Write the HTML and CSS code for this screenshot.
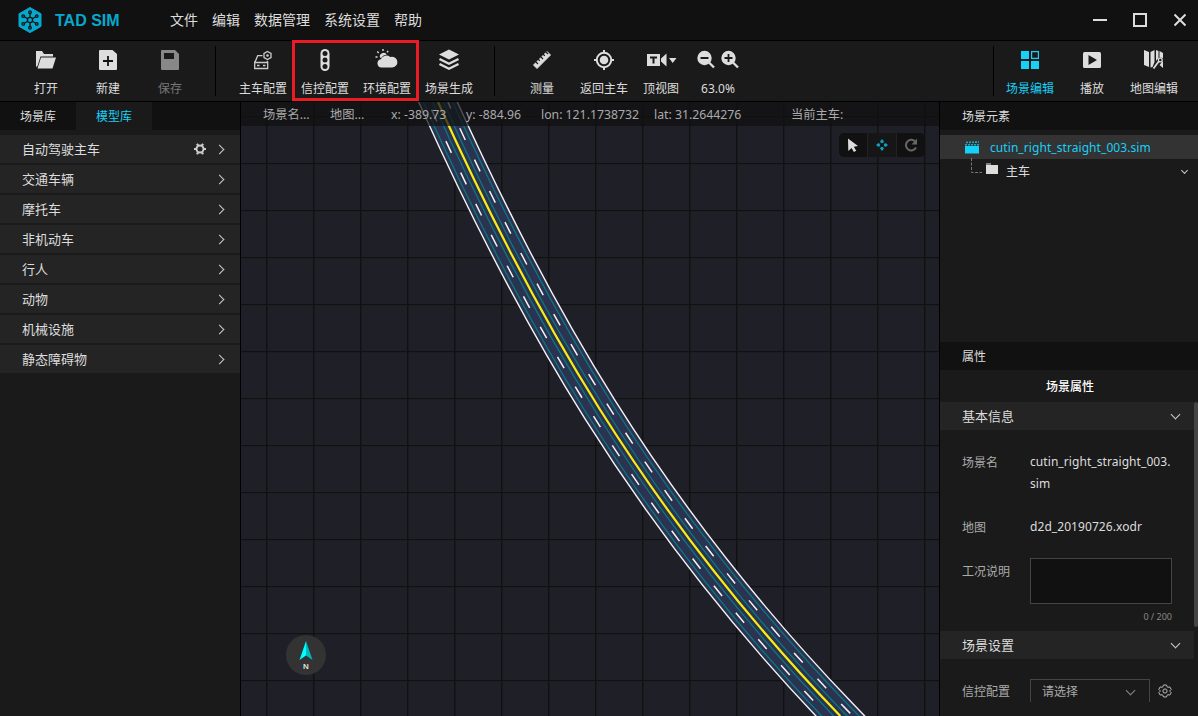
FILE: index.html
```html
<!DOCTYPE html>
<html lang="zh-CN">
<head>
<meta charset="utf-8">
<title>TAD SIM</title>
<link rel="stylesheet" href="styles.css">
</head>
<body>
<div class="app">
  <header class="titlebar">
    <svg class="logo" width="24" height="26" viewBox="0 0 24 26">
      <path d="M12 0.5 23 6.8v12.6L12 25.600 1 19.400V6.800z" fill="#06a9cd" stroke="#06a9cd" stroke-linejoin="round"/>
      <g fill="none" stroke="#111" stroke-width="1.300">
        <circle cx="12" cy="13" r="2.600"/>
        <path d="M12 10.400V6.500M12 15.600v4M9.700 11.700 6.300 9.700M14.300 11.700l3.400-2M9.700 14.300l-3.400 2M14.300 14.300l3.400 2"/>
        <circle cx="12" cy="5.200" r="1.300"/><circle cx="12" cy="20.800" r="1.300"/>
        <circle cx="5.200" cy="9.100" r="1.300"/><circle cx="18.800" cy="9.100" r="1.300"/>
        <circle cx="5.200" cy="16.900" r="1.300"/><circle cx="18.800" cy="16.900" r="1.300"/>
      </g>
    </svg>
    <span class="brand">TAD SIM</span>
    <nav class="menu"><span>文件</span><span>编辑</span><span>数据管理</span><span>系统设置</span><span>帮助</span></nav>
    <svg class="winctl" width="96" height="16" viewBox="0 0 96 16" fill="none" stroke="#ddd" stroke-width="2">
      <path d="M1 8h14M42 2h12v12H42z"/><path d="M82.500 2.500l11 11M93.500 2.500l-11 11"/>
    </svg>
  </header>

  <div class="toolbar">
    <div class="group group-file">
      <div class="tool"><svg width="24" height="24" viewBox="0 0 24 24"><path fill="#ddd" d="M2 19V3h6l2 3h9v2.500H6.500L3.500 18zM7 9.500h15L18.500 20.500H3.500z"/></svg><span>打开</span></div>
      <div class="tool"><svg width="24" height="24" viewBox="0 0 24 24"><path fill="#ddd" d="M4 2h12.500L21 6v15q0 1-1 1H4q-1 0-1-1V3q0-1 1-1z"/><path stroke="#111" stroke-width="1.800" d="M12 8v10M7 13h10"/></svg><span>新建</span></div>
      <div class="tool off"><svg width="24" height="24" viewBox="0 0 24 24"><path fill="#888" d="M4 2h13l4 4v15q0 1-1 1H4q-1 0-1-1V3q0-1 1-1z"/><path fill="#1a1a1a" d="M6 5h10v6H6z"/></svg><span>保存</span></div>
    </div>
    <div class="group group-config">
      <div class="tool"><svg width="24" height="24" viewBox="0 0 24 24" fill="none" stroke="#ccc" stroke-width="1.300"><path d="M11.500 7.700H6.700L4.500 13 3.700 14v6.500h13v-6.500L16 13M4.300 14.500h12"/><path d="M6 17.500h2.500M12 17.500h2.500" stroke-width="1.500"/><path d="M16.500 3.500 20 5.500v4L16.500 11.500 13 9.500v-4z"/><circle cx="16.500" cy="7.500" r=".7"/></svg><span>主车配置</span></div>
      <div class="tool"><svg width="24" height="24" viewBox="0 0 24 24"><rect x="7.500" y="1" width="9" height="22" rx="4.500" fill="#ddd"/><g fill="#1a1a1a"><circle cx="12" cy="5.500" r="2.500"/><circle cx="12" cy="12" r="2.500"/><circle cx="12" cy="18.500" r="2.500"/></g></svg><span>信控配置</span></div>
      <div class="tool"><svg width="24" height="24" viewBox="0 0 24 24"><g transform="translate(-1 0)"><path fill="#ddd" d="M7.500 19.500a4.200 4.200 0 0 1-.7-8.300 6.100 6.100 0 0 1 9.400-2.200 5.400 5.400 0 1 1 1.800 10.500zM6 9.700a3.800 3.800 0 0 1 6.800-3.200c-2.600.4-4.200 1.200-5.400 3.200z"/><path stroke="#ddd" stroke-width="1.400" d="M1.500 9h2M3.300 3.500l1.400 1.400M9 1v2M14.200 3l-1.200 1.400"/></g></svg><span>环境配置</span></div>
      <div class="tool"><svg width="24" height="24" viewBox="0 0 24 24"><path fill="#ddd" d="M12 1.500 22 6.500 12 11.500 2 6.500z"/><path fill="none" stroke="#ddd" stroke-width="2.300" d="M2.500 11l9.500 4.800L21.500 11M2.500 16l9.500 4.800L21.500 16"/></svg><span>场景生成</span></div>
      <div class="highlight"></div>
    </div>
    <div class="group group-view">
      <div class="tool"><svg width="24" height="24" viewBox="0 0 24 24"><path fill="#ddd" d="M17 3.500l3.500 3.500L7 20.500 3.500 17z" stroke="#ddd" stroke-linejoin="round"/><path stroke="#1a1a1a" stroke-width="1.200" d="M5.500 13.500l2.500 2.500M8 11l1.800 1.800M10.500 8.500 13 11M13 6l1.800 1.800M15.500 3.500 18 6"/></svg><span>测量</span></div>
      <div class="tool"><svg width="24" height="24" viewBox="0 0 24 24"><circle cx="12" cy="12" r="7.200" fill="none" stroke="#ddd" stroke-width="2"/><circle cx="12" cy="12" r="4.300" fill="#ddd"/><path stroke="#ddd" stroke-width="2" d="M12 2v3M12 19v3M2 12h3M19 12h3"/></svg><span>返回主车</span></div>
      <div class="tool narrow"><svg width="32" height="24" viewBox="0 0 32 24"><path fill="#ddd" d="M2 6h13v12H2zM16 10.500l5.500-5v13l-5.500-5z"/><path stroke="#1a1a1a" stroke-width="2" d="M5 9.500h7M8.500 9v6.500"/><path fill="#ddd" d="M24 10h7.500L27.700 15z"/></svg><span>顶视图</span></div>
      <div class="tool"><svg width="44" height="24" viewBox="0 0 44 24"><g fill="#ddd"><circle cx="8.500" cy="10" r="7.200"/><circle cx="32.500" cy="10" r="7.200"/></g><path stroke="#ddd" stroke-width="2.300" d="M13 14.500l5 5M37 14.500l5 5"/><path stroke="#1a1a1a" stroke-width="1.800" d="M4.500 10h8M28.500 10h8M32.500 6v8"/></svg><span>63.0%</span></div>
    </div>
    <div class="group group-mode">
      <div class="tool on"><svg width="24" height="24" viewBox="0 0 24 24" fill="#17d0f7"><path d="M3 3h8v8H3zM3 13h8v8H3zM13 13h8v8h-8z"/><path fill="none" stroke="#17d0f7" stroke-width="1.200" d="M13.600 3.600h6.800v6.800h-6.800z"/></svg><span>场景编辑</span></div>
      <div class="tool"><svg width="24" height="24" viewBox="0 0 24 24"><rect x="3" y="4" width="18" height="16" rx="1.500" fill="#ddd"/><path fill="#1a1a1a" d="M8.500 7v10L17 12z"/></svg><span>播放</span></div>
      <div class="tool"><svg width="24" height="24" viewBox="0 0 24 24"><path fill="#ddd" d="M2 2l5 2v15l-5-2zM8.500 4l4-2v12l-2 5-2 .5zM14 2l2.500 1v7L14 13zM17.500 3l3.500 2v5l-3.500-.5z"/><path fill="none" stroke="#ddd" stroke-width="1.800" d="M11.500 20.500l5.500-7.500"/><circle cx="18.300" cy="12" r="1.900" fill="none" stroke="#ddd" stroke-width="1.300"/><path fill="#ddd" d="M17.500 17l3.500 3v-7z"/></svg><span>地图编辑</span></div>
    </div>
  </div>

  <main class="main">
    <aside class="library">
      <div class="tabs"><span class="tab">场景库</span><span class="tab active">模型库</span></div>
      <div class="list">
        <div class="row"><span>自动驾驶主车</span><svg class="gear" width="14" height="14" viewBox="0 0 14 14"><circle cx="7" cy="7" r="3.500" fill="none" stroke="#ccc" stroke-width="2"/><path stroke="#ccc" stroke-width="2.200" d="M1 7h2M11 7h2M4 1.800l1 1.700M10 1.800 9 3.500M4 12.200l1-1.700M10 12.200l-1-1.700"/></svg><i class="arrow"></i></div>
        <div class="row"><span>交通车辆</span><i class="arrow"></i></div>
        <div class="row"><span>摩托车</span><i class="arrow"></i></div>
        <div class="row"><span>非机动车</span><i class="arrow"></i></div>
        <div class="row"><span>行人</span><i class="arrow"></i></div>
        <div class="row"><span>动物</span><i class="arrow"></i></div>
        <div class="row"><span>机械设施</span><i class="arrow"></i></div>
        <div class="row"><span>静态障碍物</span><i class="arrow"></i></div>
      </div>
    </aside>

    <section class="map">
      <svg class="canvas" width="698" height="614" viewBox="241 102 698 614">
        <defs><pattern id="grid" x="266" y="163" width="47" height="47" patternUnits="userSpaceOnUse"><path fill="#111" d="M0 0h47v1.200H0zM0 0h1.500v47H0z"/></pattern></defs>
        <rect x="241" y="102" width="698" height="614" fill="#1f1f28"/>
        <rect x="241" y="102" width="698" height="614" fill="url(#grid)"/>
        <g fill="none" stroke-linecap="square">
          <path class="edge" d="M438 102C530.100 306.700 642.800 511.300 840.300 716"/>
          <path class="deck" d="M438 102C530.100 306.700 642.800 511.300 840.300 716"/>
          <path class="lane" d="M423.300 102C515 306.700 626.800 511.300 821.700 716"/>
          <path class="lane" d="M432.700 102C524.700 306.700 637.100 511.300 833.600 716"/>
          <path class="lane" d="M443.300 102C535.500 306.700 648.500 511.300 847 716"/>
          <path class="lane" d="M452.700 102C545.200 306.700 658.800 511.300 858.900 716"/>
        </g>
        <g fill="none" class="dashes">
          <path stroke-dashoffset="-8.400" d="M428.100 102C520 306.700 632 511.300 827.800 716"/>
          <path stroke-dashoffset="5.800" d="M447.900 102C540.200 306.700 653.600 511.300 852.800 716"/>
        </g>
        <path class="center" d="M438 102C530.100 306.700 642.800 511.300 840.300 716"/>
      </svg>
      <div class="status">
        <span class="s-scene">场景名...</span><span class="s-map">地图...</span><span class="s-x">x: -389.73</span><span class="s-y">y: -884.96</span><span class="s-lon">lon: 121.1738732</span><span class="s-lat">lat: 31.2644276</span><span>当前主车:</span>
      </div>
      <div class="maptools">
        <span><svg width="18" height="18" viewBox="0 0 18 18"><path fill="#ddd" d="M4 2.500 14 10l-4.200.7 2.400 4.100-2.300 1.300-2.300-4.200L4.300 15z"/></svg></span>
        <span class="mid"><svg width="18" height="18" viewBox="0 0 18 18" fill="#0b9fba"><path d="M9 3l2 2.500-1 1.500H8L7 5.500zM9 15l2-2.500-1-1.500H8l-1 1.500zM3 9l2.500-2L7 8v2l-1.500 1zM15 9l-2.500-2L11 8v2l1.500 1z"/></svg></span>
        <span><svg width="18" height="18" viewBox="0 0 18 18"><path fill="none" stroke="#666" stroke-width="2" d="M14 11.500A5.300 5.300 0 1 1 13.500 6"/><path fill="#666" d="M15 2.500v6H9.500z"/></svg></span>
      </div>
      <div class="compass"><svg width="14" height="19" viewBox="0 0 14 19"><path fill="#00ffff" d="M7 0 .5 19 7 14.500z"/><path fill="#00b8bd" d="M7 0l6.500 19L7 14.500z"/></svg><span>N</span></div>
    </section>

    <aside class="inspector">
      <div class="head">场景元素</div>
      <div class="tree">
        <div class="node root"><svg width="15" height="13" viewBox="0 0 15 13"><path fill="#17d0f7" d="M0 5h14v7.500H0z"/><path stroke="#17a9c7" stroke-width="1.600" stroke-dasharray="2 1" d="M0 3.700h14M1 1.500l13-.5"/></svg><span>cutin_right_straight_003.sim</span></div>
        <div class="node child"><svg width="28" height="17" viewBox="0 0 28 17"><path fill="none" stroke="#777" stroke-dasharray="3 1.500" d="M.5 0v14.500H11"/><path fill="#ddd" d="M15 7h12v9H15zM15 5.500h5v1h-5z"/></svg><span>主车</span><i class="arrow down small"></i></div>
      </div>
      <div class="head">属性</div>
      <div class="title">场景属性</div>
      <div class="props">
        <div class="section"><span>基本信息</span><i class="arrow down"></i></div>
        <div class="form form-basic">
          <div class="field f-name"><label>场景名</label><div class="val">cutin_right_straight_003.<br>sim</div></div>
          <div class="field f-map"><label>地图</label><div class="val">d2d_20190726.xodr</div></div>
          <div class="field f-note"><label>工况说明</label><div class="area"></div></div>
          <div class="count">0 / 200</div>
        </div>
        <div class="section"><span>场景设置</span><i class="arrow down"></i></div>
        <div class="form-set"><label>信控配置</label><div class="select"><span>请选择</span><i class="arrow down dim"></i></div>
          <svg width="14" height="14" viewBox="0 0 14 14" fill="none" stroke="#bbb"><path d="M5.500 1h3l.5 1.700 1 .6 1.800-.4 1.400 2.500L12 6.600v.8l1.200 1.200-1.400 2.500-1.800-.4-1 .6-.5 1.700h-3L5 11.300l-1-.6-1.800.4L.8 8.600 2 7.400v-.8L.8 5.400l1.400-2.500 1.800.4 1-.6z"/><circle cx="7" cy="7" r="2.100"/></svg></div>
        <div class="thumb"></div>
      </div>
    </aside>
  </main>
</div>
</body>
</html>
```
FILE: styles.css
```css
* { box-sizing: border-box; }
body {
  margin: 0;
  background: #1a1a1a;
  color: #ddd;
  font: 12px/18px "Noto Sans", "Noto Sans CJK SC", sans-serif;
}
.app { width: 1198px; height: 716px; display: flex; flex-direction: column; overflow: hidden; }
svg { display: block; flex: none; }
span, label { white-space: nowrap; }

.titlebar { height: 41px; flex: none; display: flex; align-items: center; background: #111; border-bottom: 1px solid #000; padding: 0 10px 0 18px; }
.brand { width: 115px; margin-left: 13px; padding-top: 1px; color: #06a9cd; font: bold 16px/24px "Liberation Sans", sans-serif; }
.menu { display: flex; gap: 14px; font-size: 14px; line-height: 20px; }
.winctl { margin-left: auto; }

.toolbar { height: 61px; flex: none; display: flex; border-bottom: 1px solid #000; }
.group { display: flex; position: relative; }
.group::after { content: ""; width: 1px; height: 50px; margin-top: 5px; background: #000; }
.group-file { padding-left: 15px; }
.group-file::after { margin-left: 14px; }
.group-config { padding-left: 16px; }
.group-config::after { margin-left: 14px; }
.group-view { padding-left: 16px; }
.group-view::after { display: none; }
.group-mode { margin-left: auto; padding-right: 13px; }
.group-mode::after { order: -1; margin-right: 5px; }
.tool { width: 62px; padding-top: 7px; display: flex; flex-direction: column; align-items: center; gap: 8px; }
.tool.narrow { width: 52px; }
.tool.off { color: #777; }
.tool.on { color: #17d0f7; }
.highlight { position: absolute; left: 76px; top: -1px; width: 127px; height: 61px; border: 3px solid #ed1c24; }

.main { flex: 1; min-height: 0; display: grid; grid-template-columns: 241px 698px 259px; }
.library { border-right: 1px solid #000; }
.tabs { height: 28px; display: flex; background: #111; }
.tab { width: 76px; line-height: 30px; height: 28px; text-align: center; }
.tab.active { color: #17d0f7; background: #1a1a1a; }
.list { padding-top: 5px; display: flex; flex-direction: column; gap: 2px; }
.row { height: 28px; display: flex; align-items: center; padding: 0 14px 0 22px; background: #242424; font-size: 13px; }
.row .arrow { margin-left: auto; }
.gear { margin-left: auto; }
.row .gear + .arrow { margin-left: 12px; }
.arrow { width: 7px; height: 7px; border: solid #ccc; border-width: 1px 1px 0 0; transform: translateX(-3px) rotate(45deg); }
.arrow.down { transform: translateY(-2px) rotate(135deg); }
.arrow.small { width: 5px; height: 5px; }
.child .arrow.small { transform: translateY(-1px) rotate(135deg); }
.arrow.dim { border-color: #888; }

.map { position: relative; overflow: hidden; }
.edge { stroke: #f4f4f4; stroke-width: 36.6; }
.deck { stroke: #2b3350; stroke-width: 33.8; }
.lane { stroke: #087880; stroke-width: 1.3; }
.dashes { stroke: #f4f4f4; stroke-width: 1.5; stroke-dasharray: 13 21.7; }
.center { fill: none; stroke: #f6ee12; stroke-width: 2.2; }
.status { position: absolute; inset: 0 0 auto; height: 24px; padding: 2px 0 0 22px; display: flex; align-items: center; background: rgba(17, 17, 17, .72); color: #aaa; font-size: 12.250px; }
.s-scene { width: 67px; }
.s-map { width: 61px; }
.s-x, .s-y { width: 75px; }
.s-lon { width: 113px; }
.s-lat { width: 137px; }
.maptools { position: absolute; left: 598px; top: 31px; display: flex; border-radius: 5px; overflow: hidden; background: #111; }
.maptools span { width: 28px; height: 24px; padding: 3px 5px; }
.maptools .mid { width: 30px; padding-left: 5px; background: #161616; border: solid #222; border-width: 0 1px; }
.compass { position: absolute; left: 45px; top: 533px; width: 40px; height: 40px; border-radius: 50%; background: #333; display: flex; flex-direction: column; align-items: center; padding-top: 6px; font: bold 8px/13px "Liberation Sans", sans-serif; }

.inspector { border-left: 1px solid #000; display: flex; flex-direction: column; }
.head { height: 28px; flex: none; background: #111; padding-left: 22px; line-height: 30px; }
.tree { height: 212px; flex: none; padding-top: 5px; }
.node { height: 24px; display: flex; align-items: center; }
.node span { padding-top: 2px; }
.root { padding-left: 25px; gap: 10px; background: #333; color: #17d0f7; letter-spacing: .07px; }
.child { padding: 0 11px 0 31px; gap: 7px; }
.child svg { align-self: flex-start; margin-top: -1px; }
.child .arrow { margin-left: auto; }
.title { height: 32px; flex: none; padding-left: 2px; line-height: 34px; text-align: center; color: #fff; font-weight: 500; }
.props { position: relative; height: 300px; overflow: hidden; padding-right: 4px; }
.section { height: 28px; display: flex; align-items: center; justify-content: space-between; padding: 0 15px 0 22px; background: #242424; font-size: 13px; }
.form-basic { height: 201px; padding: 21px 18px 0 22px; color: #aaa; }
.field { display: flex; line-height: 22px; }
.field label, .form-set label { width: 68px; flex: none; padding-top: 1px; }
.val { color: #ddd; letter-spacing: .07px; }
.f-name { height: 65px; }
.f-map { height: 42px; }
.f-note label { padding-top: 3px; }
.area { width: 142px; height: 46px; background: #111; border: 1px solid #444; }
.count { width: 210px; text-align: right; font-size: 9px; line-height: 26px; color: #888; }
.form-set { display: flex; padding: 20px 0 0 22px; color: #aaa; line-height: 24px; }
.select { width: 120px; height: 26px; border: 1px solid #444; display: flex; align-items: center; justify-content: space-between; padding: 0 15px 0 11px; }
.form-set svg { margin: 5px 0 0 8px; }
.thumb { position: absolute; right: 0; top: 0; width: 4px; height: 225px; border-radius: 2px; background: #444; }
```
